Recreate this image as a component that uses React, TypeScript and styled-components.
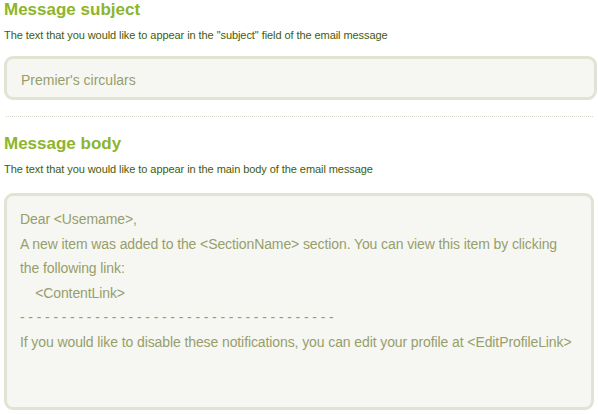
import styled, { createGlobalStyle } from 'styled-components'

const GlobalStyle = createGlobalStyle`
  html, body {
    margin: 0;
    padding: 0;
    background: #ffffff;
    font-family: 'Liberation Sans', Arial, sans-serif;
  }
`

const Page = styled.main`
  width: 598px;
  padding: 0 2px 0 4px;
  box-sizing: border-box;
`

const Section = styled.section`
  display: flex;
  flex-direction: column;
`

const Heading = styled.h2`
  margin: 0;
  font-size: 17px;
  line-height: 20px;
  font-weight: 700;
  color: #8db52b;
`

const Hint = styled.p`
  margin: 9px 0 0;
  font-size: 11px;
  line-height: 13px;
  letter-spacing: -0.07px;
  color: #3e5c0c;
`

const Field = styled.div<{ $tall?: boolean }>`
  margin-top: ${({ $tall }) => ($tall ? '17px' : '14px')};
  box-sizing: border-box;
  width: ${({ $tall }) => ($tall ? '590px' : '593px')};
  height: ${({ $tall }) => ($tall ? '217px' : '44px')};
  border: 3px solid #e1e4d4;
  border-radius: 9px;
  background: #f6f7f2;
  padding: ${({ $tall }) => ($tall ? '11px 13px' : '4px 14px 0')};
  display: flex;
  flex-direction: column;
  justify-content: ${({ $tall }) => ($tall ? 'flex-start' : 'center')};
  color: #969e6c;
  font-size: 14px;
  letter-spacing: ${({ $tall }) => ($tall ? '-0.1px' : '0')};
`

const Line = styled.div`
  line-height: 24.6px;
  white-space: pre;
`

const Divider = styled.hr`
  margin: 16px 0 17px 2px;
  width: 587px;
  border: 0;
  border-top: 1px dotted #d6d8cc;
  height: 0;
`

const dashes = Array.from({ length: 38 }, () => '-').join(' ')

export default function App() {
  return (
    <>
      <GlobalStyle />
      <Page>
        <Section>
          <Heading>Message subject</Heading>
          <Hint>The text that you would like to appear in the "subject" field of the email message</Hint>
          <Field>
            <Line>Premier's circulars</Line>
          </Field>
        </Section>
        <Divider />
        <Section>
          <Heading>Message body</Heading>
          <Hint>The text that you would like to appear in the main body of the email message</Hint>
          <Field $tall>
            <Line>Dear &lt;Usemame&gt;,</Line>
            <Line>A new item was added to the &lt;SectionName&gt; section. You can view this item by clicking</Line>
            <Line>the following link:</Line>
            <Line>{'    <ContentLink>'}</Line>
            <Line>{dashes}</Line>
            <Line>If you would like to disable these notifications, you can edit your profile at &lt;EditProfileLink&gt;</Line>
          </Field>
        </Section>
      </Page>
    </>
  )
}
